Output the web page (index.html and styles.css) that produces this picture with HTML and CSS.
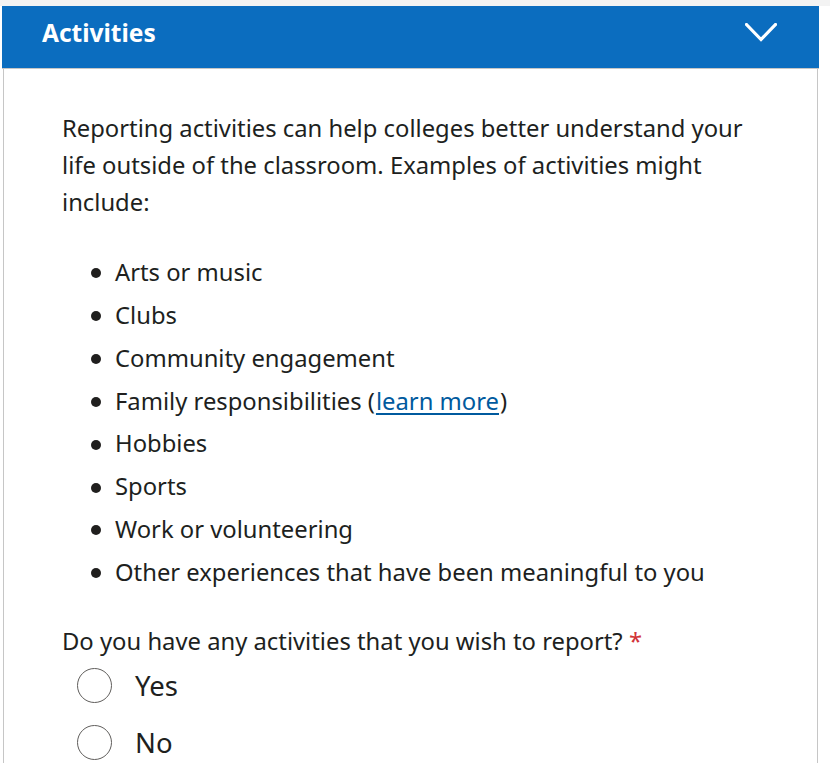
FILE: index.html
```html
<!DOCTYPE html>
<html lang="en">
<head>
<meta charset="utf-8">
<title>Activities</title>
<link rel="stylesheet" href="styles.css">
</head>
<body>
<div class="topstrip"></div>
<section class="card">
  <header class="card-header">
    <h2 class="card-title">Activities</h2>
    <svg class="chevron" width="32" height="19" viewBox="0 0 32 19" aria-hidden="true">
      <polyline points="1.5,1.5 16,16.5 30.5,1.5" fill="none" stroke="#ffffff" stroke-width="3.2" stroke-linecap="square"/>
    </svg>
  </header>
  <div class="card-body">
    <p class="intro">Reporting activities can help colleges better understand your life outside of the classroom. Examples of activities might include:</p>
    <ul class="examples">
      <li>Arts or music</li>
      <li>Clubs</li>
      <li>Community engagement</li>
      <li>Family responsibilities (<a href="#" class="link">learn more</a>)</li>
      <li>Hobbies</li>
      <li>Sports</li>
      <li>Work or volunteering</li>
      <li>Other experiences that have been meaningful to you</li>
    </ul>
    <p class="question">Do you have any activities that you wish to report? <span class="req">*</span></p>
    <div class="radios">
      <label class="radio"><span class="circle"></span><span class="radio-text">Yes</span></label>
      <label class="radio"><span class="circle"></span><span class="radio-text">No</span></label>
    </div>
  </div>
</section>
</body>
</html>
```
FILE: styles.css
```css
html, body {
  margin: 0;
  padding: 0;
  background: #ffffff;
}
body {
  font-family: "Noto Sans", "Open Sans", sans-serif;
  color: #201f1e;
  width: 830px;
  height: 763px;
  overflow: hidden;
}
.topstrip {
  height: 6px;
  background: #f3f3f3;
}
.card {
  margin-left: 2px;
  width: 817px;
}
.card-header {
  height: 63px;
  background: #0b6dbf;
  display: flex;
  align-items: center;
  justify-content: space-between;
  padding: 0 42px 0 40px;
  box-sizing: border-box;
  border-bottom: 1px solid #c6c6c6;
}
.card-title {
  margin: 0;
  color: #ffffff;
  font-size: 24.5px;
  font-weight: 700;
  line-height: 1;
  padding-bottom: 7px;
}
.chevron {
  display: block;
  margin-bottom: 10px;
}
.card-body {
  box-sizing: border-box;
  margin: 0 1px 0 1px;
  border-left: 1px solid #c6c6c6;
  border-right: 1px solid #c6c6c6;
  padding: 41px 56px 0 58px;
  font-size: 23.8px;
  height: 694px;
}
.intro {
  margin: 0;
  line-height: 37px;
}
.examples {
  list-style: none;
  margin: 30px 0 0 0;
  padding: 0 0 0 29px;
}
.examples li {
  display: flex;
  align-items: center;
  line-height: 42.85px;
}
.examples li::before {
  content: "";
  width: 10px;
  height: 10px;
  border-radius: 50%;
  background: #201f1e;
  margin-right: 14px;
  margin-top: 2px;
  flex: none;
}
.link {
  color: #005a9e;
  text-decoration: underline;
  text-underline-offset: 3px;
  margin: 0 1px;
}
.question {
  margin: 29px 0 0 0;
  line-height: 37px;
}
.req {
  color: #d13438;
}
.radios {
  display: flex;
  flex-direction: column;
  gap: 7px;
  margin-top: 1px;
  padding-left: 15px;
}
.radio {
  display: flex;
  align-items: center;
  height: 50px;
  gap: 23px;
}
.circle {
  width: 33px;
  height: 33px;
  border: 1.5px solid #605e5c;
  border-radius: 50%;
  flex: none;
}
.radio-text {
  font-size: 27.5px;
}
```
